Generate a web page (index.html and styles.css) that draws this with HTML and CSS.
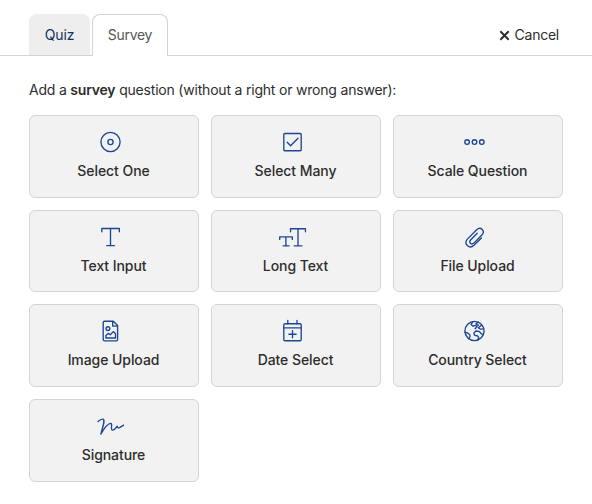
FILE: index.html
```html
<!DOCTYPE html>
<html lang="en">
<head>
<meta charset="utf-8">
<title>Add question</title>
<link rel="stylesheet" href="styles.css">
</head>
<body>
<header class="topbar">
  <nav class="tabs">
    <a class="tab">Quiz</a>
    <a class="tab active">Survey</a>
  </nav>
  <a class="cancel"><svg class="close" viewBox="0 0 10 10"><path d="M1.2 1.2l7.6 7.6M8.8 1.2L1.2 8.8"/></svg>Cancel</a>
</header>
<main>
  <p class="intro">Add a <b>survey</b> question (without a right or wrong answer):</p>
  <div class="grid">
    <button class="card"><svg class="icon" viewBox="0 0 28 28"><circle cx="14" cy="14" r="9.6"/><circle cx="14" cy="14" r="2.6"/></svg><span>Select One</span></button>
    <button class="card"><svg class="icon" viewBox="0 0 28 28"><rect x="5.3" y="5.5" width="17.4" height="17.2" rx="1"/><path d="M8.7 14.2l3.4 3.5 7.4-7.5"/></svg><span>Select Many</span></button>
    <button class="card"><svg class="icon" viewBox="0 0 28 28"><circle cx="6.6" cy="14" r="2.3"/><circle cx="14" cy="14" r="2.3"/><circle cx="21.3" cy="14" r="2.3"/></svg><span>Scale Question</span></button>
    <button class="card"><svg class="icon" viewBox="0 0 28 28"><path d="M5.3 8.7V5.5h17.5v3.2M14 5.500v17.1M10.2 22.6h7.7"/></svg><span>Text Input</span></button>
    <button class="card"><svg class="icon" viewBox="0 0 28 28"><path d="M12 8.7V5.7h15v3M19.5 5.7v17.1M15.7 22.8h7.7M1.2 16.4v-2.6h12.6v2.6M7.4 13.8v9M4.6 22.8h6"/></svg><span>Long Text</span></button>
    <button class="card"><svg class="icon" viewBox="0 0 28 28"><path d="M20.9 14.9l-7.4 7.4c-4.7 4.3-10.7-1.5-6.6-6.2L16.2 6.7c4-3.5 8.8 1.1 5.4 5.1l-8.2 8.3c-2.8 2.3-5.4-.6-3.3-3.1l6.600-6.700"/></svg><span>File Upload</span></button>
    <button class="card"><svg class="icon" viewBox="0 0 28 28"><path d="M8 4.2h8.8l4.3 4.3v14c0 .8-.5 1.3-1.3 1.3H8c-.8 0-1.3-.5-1.3-1.3v-17c0-.8.5-1.3 1.3-1.3zM16.2 4.2v4.9h4.9"/><circle cx="11.4" cy="11.6" r="1.9"/><path d="M9.4 21v-2.6l2.4-2 2 1.4 3-3.2 2.2 2.2V21z"/></svg><span>Image Upload</span></button>
    <button class="card"><svg class="icon" viewBox="0 0 28 28"><rect x="5.3" y="6.7" width="17.4" height="17" rx="1.2"/><path d="M5.3 10.9h17.4M9.3 3.5v3.2M18.5 3.5v3.2M14 13.6v7.2M10.4 17.2h7.2"/></svg><span>Date Select</span></button>
    <button class="card"><svg class="icon" viewBox="0 0 28 28"><circle cx="14" cy="14" r="9.6"/><path d="M4.5 15.3c2 .2 4.1 1.1 4.9 2.7.7 1.6-.6 2.7-1 3.9M12.2 4.8l-1.6 2.6 2 1.8 2.4-.8 1.6 1.2-2 2.2M17.5 5.2l-2 1.6 2.4 1.6M21 8.2l-3.2 2.6 2.2 1.4 3.2-.4M22.8 17.4l-2-.6-2.2-2.4-3.2-.4-2 1.9.5 2.2 3.3.9 1 1.7-.9 2.1"/></svg><span>Country Select</span></button>
    <button class="card"><svg class="icon" viewBox="0 0 28 28"><path d="M1.5 9.6C3.6 7.8 5.2 6.8 6.5 7.2c2 .7 1 4.3-2.2 14.9C7.5 16.5 11.5 11.6 14 11.3c2.6 0-.3 5.2 1.5 6.6 1.8 1.2 3.6-1.7 5.2-3.6.3 1.6 1 1.9 2.3 1.3l4.2-2.5"/></svg><span>Signature</span></button>
  </div>
</main>
</body>
</html>
```

FILE: styles.css
```css
* { box-sizing: border-box; }
body {
  margin: 0;
  background: #fff;
  color: #2d2d2d;
  font: 14px/20px Inter, "Liberation Sans", sans-serif;
}
.topbar {
  display: flex;
  justify-content: space-between;
  height: 56px;
  padding: 14px 33px 0 29px;
  border-bottom: 1px solid #d4d4d4;
}
.tabs { display: flex; gap: 2px; }
.tab {
  width: 61px;
  height: 41px;
  padding: 10px 0;
  border: 1px solid #eee;
  border-bottom: 0;
  border-radius: 8px 8px 0 0;
  background: #eee;
  color: #14305f;
  text-align: center;
  letter-spacing: -0.1px;
}
.tab.active {
  width: 76px;
  height: 42px;
  border-color: #d4d4d4;
  background: #fff;
  color: #555;
  letter-spacing: -0.3px;
}
.cancel {
  display: flex;
  align-items: center;
  height: 42px;
  gap: 5px;
  letter-spacing: -0.25px;
}
.close {
  width: 11px;
  height: 11px;
  fill: none;
  stroke: #2d2d2d;
  stroke-width: 1.8;
}
main { padding: 24px 29px; }
.intro {
  margin: 0 0 15px;
  letter-spacing: -0.2px;
}
.intro b { font-weight: 600; }
.grid {
  display: grid;
  grid-template-columns: repeat(3, 170px);
  grid-auto-rows: 82.7px;
  gap: 12px;
}
.card {
  display: flex;
  flex-direction: column;
  align-items: center;
  padding: 12px 1px 0 0;
  border: 1px solid #d4d4d4;
  border-radius: 6px;
  background: #f2f2f2;
  color: #2d2d2d;
  font: inherit;
  font-weight: 500;
  letter-spacing: -0.07px;
}
.icon {
  width: 28px;
  height: 28px;
  margin: 0 7px 5px 0;
  transform: translateX(.5px);
  fill: none;
  stroke: #1c4595;
  stroke-width: 1.35;
  stroke-linecap: round;
  stroke-linejoin: round;
}
```
